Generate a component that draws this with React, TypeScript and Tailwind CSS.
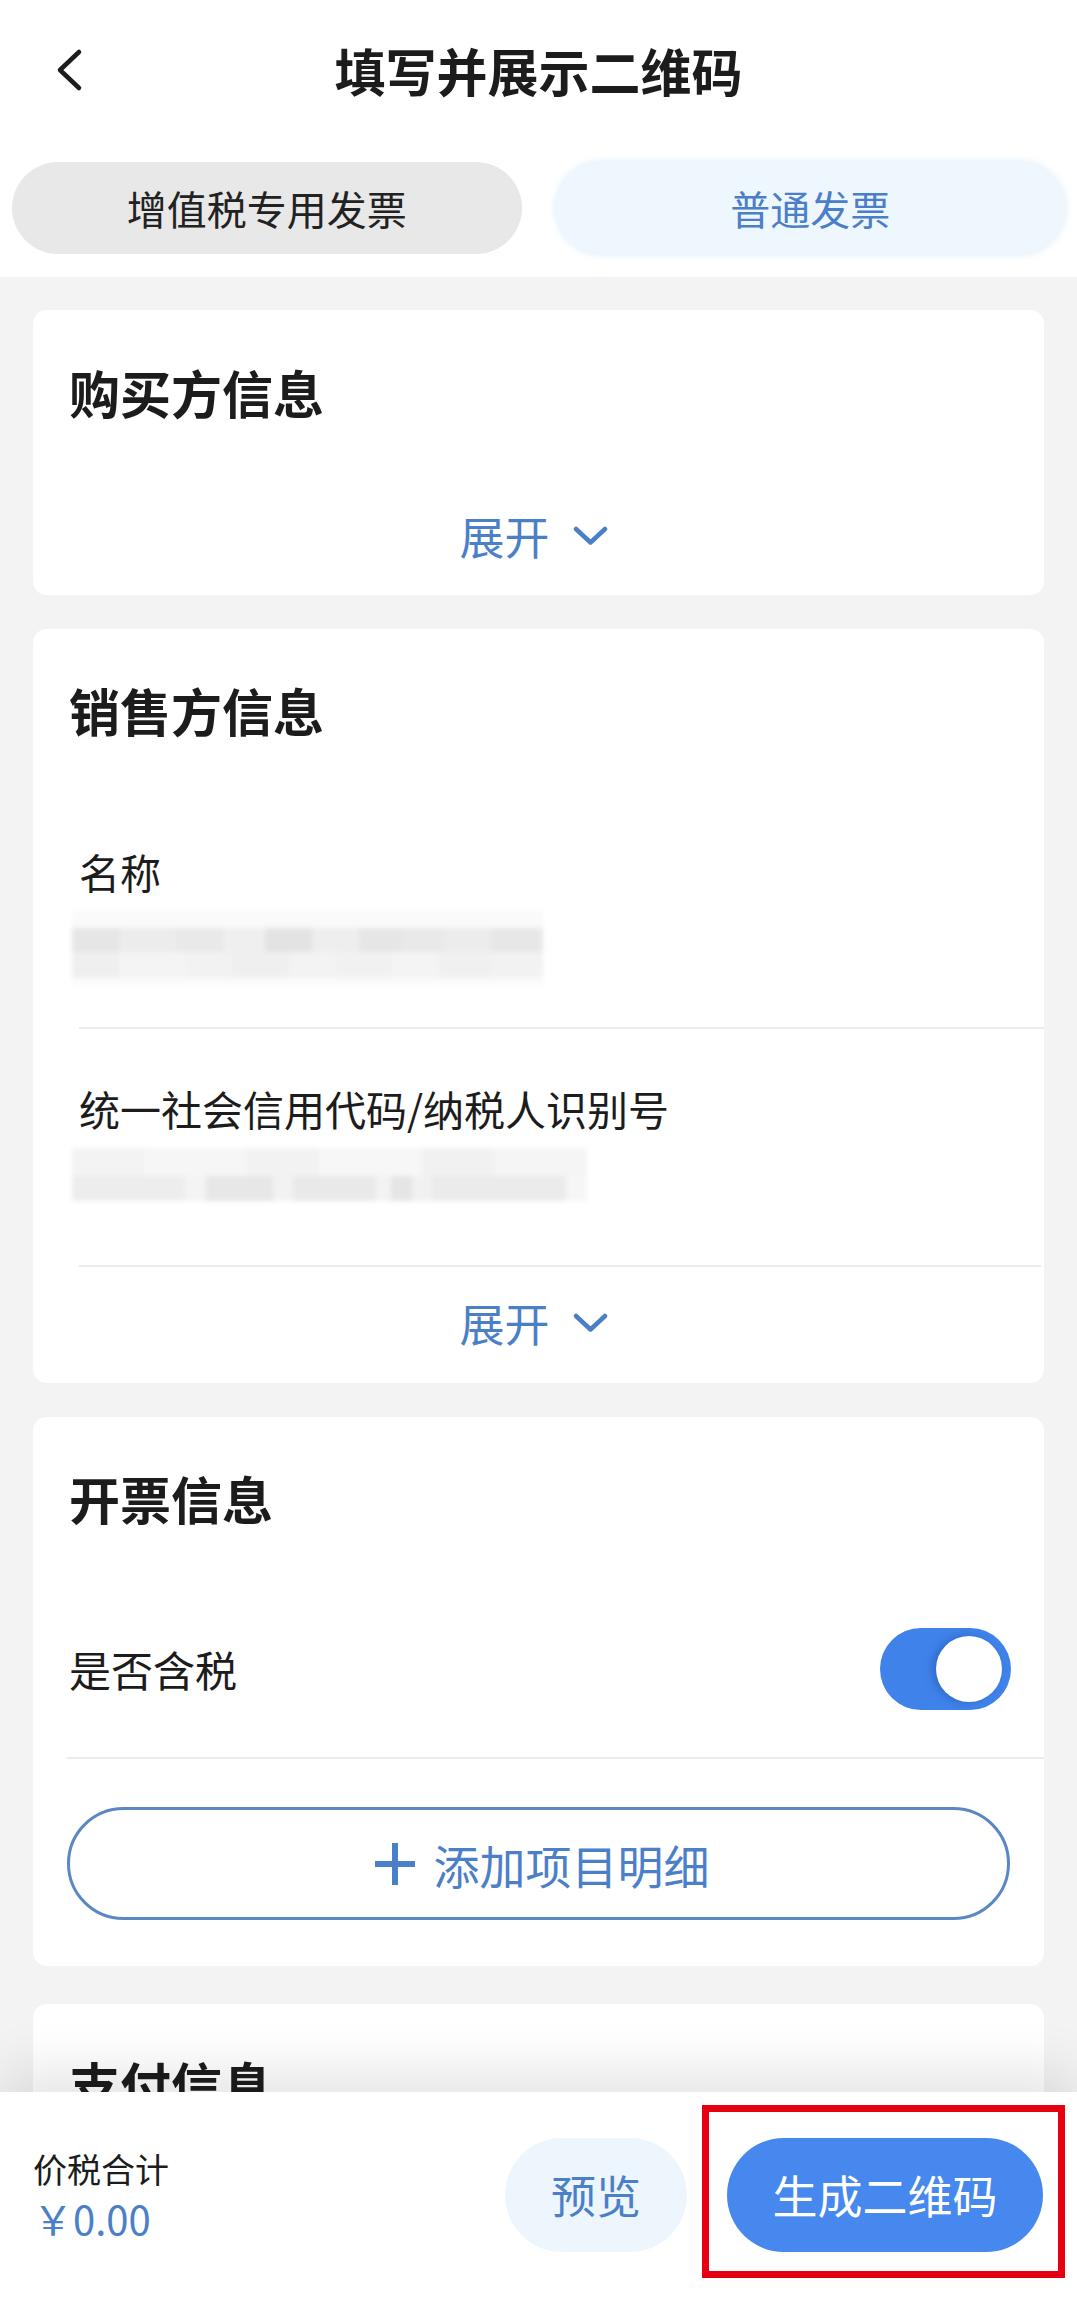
import React from "react";

type Seg = [number, string];

function Blur({ w, rows }: { w: number; rows: { h: number; segs: Seg[] }[] }) {
  return (
    <div className="relative" style={{ width: w }}>
      <div className="flex flex-col blur-[2.5px]">
        {rows.map((r, i) => (
          <div key={i} className="flex" style={{ height: r.h }}>
            {r.segs.map(([sw, c], j) => (
              <div key={j} style={{ width: `${sw}%`, backgroundColor: c }} />
            ))}
          </div>
        ))}
      </div>
    </div>
  );
}

function Expand({ className = "" }: { className?: string }) {
  return (
    <div className={`flex items-center justify-center gap-[23px] pr-[10px] h-[44px] text-[45px] leading-[44px] text-[#4b7fc8] ${className}`}>
      <span>展开</span>
      <svg width="35" height="20" viewBox="0 0 35 20" fill="none">
        <polyline points="3,3 17.5,16.5 32,3" stroke="#4b7fc8" strokeWidth="4.5" strokeLinecap="round" strokeLinejoin="round" />
      </svg>
    </div>
  );
}

export default function App() {
  return (
    <div className="w-[1077px] h-[2297px] flex flex-col bg-white overflow-hidden font-['Noto_Sans_CJK_SC','Noto_Sans',sans-serif] text-[#1c1c1c]">
      {/* Header */}
      <div className="h-[140px] grid grid-cols-[1fr_auto_1fr] items-center">
        <div className="pl-[54px] flex items-center">
          <svg width="30" height="44" viewBox="0 0 30 44" fill="none">
            <polyline points="25,4 6,22 25,40" stroke="#1c1c1c" strokeWidth="4.5" strokeLinecap="round" strokeLinejoin="round" />
          </svg>
        </div>
        <div className="text-[51px] font-bold leading-none">填写并展示二维码</div>
        <div />
      </div>

      {/* Tabs */}
      <div className="grid grid-cols-2 gap-[34px] px-[12px] pt-[22px] pb-[23px]">
        <div className="h-[92px] rounded-full bg-[#e8e8e8] flex items-center justify-center text-[40px] leading-none text-[#222]">
          增值税专用发票
        </div>
        <div className="h-[92px] rounded-full bg-[#eef6fe] shadow-[0_0_8px_rgba(214,232,250,0.9)] flex items-center justify-center text-[40px] leading-none text-[#4b7fc8]">
          普通发票
        </div>
      </div>

      {/* Content */}
      <div className="flex-1 bg-[#f3f3f3] overflow-hidden px-[33px] pt-[33px] flex flex-col gap-[34px]">
        {/* Buyer */}
        <div className="shrink-0 bg-white rounded-[14px] h-[285px] flex flex-col pt-[57px]">
          <div className="pl-[36px] text-[51px] font-bold leading-[50px]">购买方信息</div>
          <Expand className="mt-[97px]" />
        </div>

        {/* Seller */}
        <div className="shrink-0 bg-white rounded-[14px] h-[754px] flex flex-col pt-[56px]">
          <div className="pl-[36px] text-[51px] font-bold leading-[50px]">销售方信息</div>
          <div className="pl-[46px] mt-[116px] text-[41px] leading-[40px]">名称</div>
          <div className="ml-[39px] mt-[19px]">
            <Blur
              w={471}
              rows={[
                { h: 18, segs: [[100, "#fafafa"]] },
                { h: 24, segs: [[10, "#e6e6e6"], [12, "#ececec"], [10, "#e9e9e9"], [9, "#efefef"], [10, "#e3e3e3"], [10, "#eeeeee"], [9, "#e6e6e6"], [9, "#e9e9e9"], [10, "#ececec"], [11, "#e7e7e7"]] },
                { h: 26, segs: [[10, "#efefef"], [14, "#f4f4f4"], [10, "#f2f2f2"], [12, "#efefef"], [10, "#f3f3f3"], [12, "#f1f1f1"], [10, "#f4f4f4"], [11, "#f0f0f0"], [11, "#f2f2f2"]] },
                { h: 9, segs: [[100, "#fbfbfb"]] },
              ]}
            />
          </div>
          <div className="ml-[46px] mt-[40px] h-[2px] bg-[#ececec]" />
          <div className="pl-[46px] mt-[59px] text-[41px] leading-[40px]">统一社会信用代码/纳税人识别号</div>
          <div className="ml-[39px] mt-[20px]">
            <Blur
              w={515}
              rows={[
                { h: 28, segs: [[14, "#f3f3f3"], [20, "#f6f6f6"], [14, "#f2f2f2"], [20, "#f7f7f7"], [14, "#f1f1f1"], [18, "#f5f5f5"]] },
                { h: 25, segs: [[22, "#ededed"], [4, "#f4f4f4"], [13, "#e7e7e7"], [4, "#f2f2f2"], [16, "#e9e9e9"], [3, "#f3f3f3"], [4, "#e5e5e5"], [4, "#f1f1f1"], [26, "#ebebeb"], [4, "#f6f6f6"]] },
              ]}
            />
          </div>
          <div className="ml-[46px] mr-[3px] mt-[64px] h-[2px] bg-[#ececec]" />
          <Expand className="mt-[34px]" />
        </div>

        {/* Invoice info */}
        <div className="shrink-0 bg-white rounded-[14px] h-[549px] flex flex-col pt-[56px]">
          <div className="pl-[36px] text-[51px] font-bold leading-[50px]">开票信息</div>
          <div className="mt-[105px] h-[82px] flex items-center justify-between pl-[36px] pr-[33px]">
            <span className="text-[42px] leading-none">是否含税</span>
            <div className="w-[131px] h-[82px] rounded-full bg-[#3f83ea] flex items-center justify-end pr-[9px]">
              <div className="w-[66px] h-[66px] rounded-full bg-white shadow-[-4px_0_8px_rgba(20,60,140,0.35)]" />
            </div>
          </div>
          <div className="ml-[34px] mt-[47px] h-[2px] bg-[#ececec]" />
          <div className="mx-[34px] mt-[48px] h-[113px] rounded-full border-[3px] border-[#5b88c3] flex items-center justify-center gap-[18px] pl-[6px] text-[46px] leading-none text-[#4b7fc8]">
            <svg width="42" height="46" viewBox="0 0 42 46" fill="none">
              <line x1="21" y1="2" x2="21" y2="44" stroke="#4b7fc8" strokeWidth="6" />
              <line x1="1" y1="23" x2="41" y2="23" stroke="#4b7fc8" strokeWidth="6" />
            </svg>
            <span>添加项目明细</span>
          </div>
        </div>

        {/* Payment info */}
        <div className="shrink-0 mt-[4px] bg-white rounded-[14px] h-[400px] flex flex-col pt-[55px]">
          <div className="pl-[36px] text-[51px] font-bold leading-[50px]">支付信息</div>
        </div>
      </div>

      {/* Bottom bar */}
      <div className="relative z-10 h-[205px] shrink-0 bg-white shadow-[0_-22px_50px_rgba(0,0,0,0.10)] flex items-center pl-[33px] pr-[34px]">
        <div className="flex flex-col gap-[12px]">
          <span className="text-[34px] leading-none text-[#1c1c1c]">价税合计</span>
          <span className="text-[40px] leading-none text-[#4b7fc8]">￥0.00</span>
        </div>
        <div className="ml-auto flex items-center gap-[40px]">
          <div className="w-[182px] h-[114px] rounded-full bg-[#edf5fd] flex items-center justify-center text-[45px] leading-none text-[#4b7fc8]">
            预览
          </div>
          <div className="w-[316px] h-[114px] rounded-full bg-[#4688ee] flex items-center justify-center text-[45px] leading-none text-white">
            生成二维码
          </div>
        </div>
        <div className="absolute left-[702px] top-[13px] w-[363px] h-[173px] border-[7px] border-[#e60012]" />
      </div>
    </div>
  );
}
